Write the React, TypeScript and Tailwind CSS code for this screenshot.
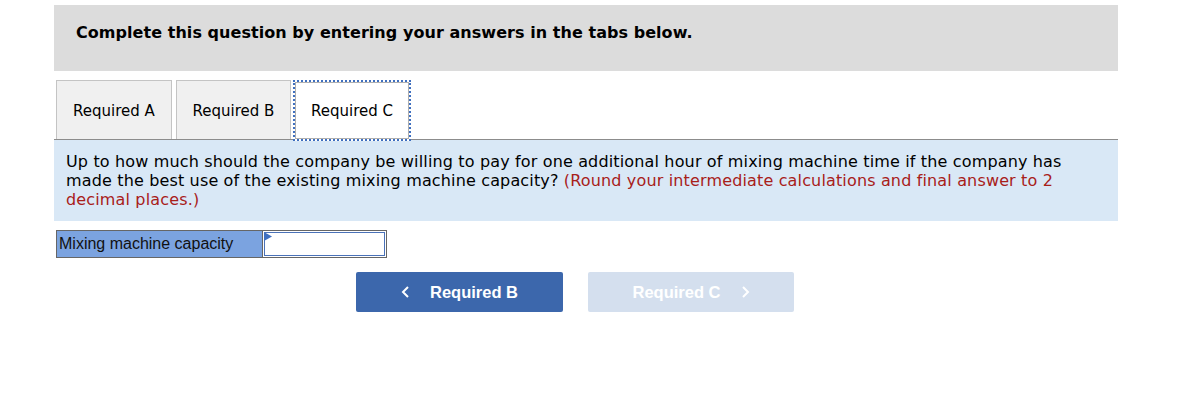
import React from "react";

export default function App() {
  const verdana = { fontFamily: '"DejaVu Sans", Verdana, sans-serif' };
  return (
    <div className="w-[1186px] h-[403px] bg-white" style={verdana}>
      <div className="ml-[54px] w-[1064px] pt-[5px]">
        <div className="h-[66px] bg-[#dcdcdc] pl-[22px] pt-[18px]">
          <div className="text-[16px] font-bold text-black leading-[19px] tracking-[0.05px]">
            Complete this question by entering your answers in the tabs below.
          </div>
        </div>
        <div className="mt-[9px] flex items-end border-b border-[#8c8c8c] pl-[2px] h-[60px]">
          <div className="w-[116px] h-[59px] bg-[#f0f0f0] border border-b-0 border-[#c4c4c4] flex items-center justify-center pt-[2px] text-[15px] text-black">
            Required A
          </div>
          <div className="ml-[4px] w-[115px] h-[59px] bg-[#f0f0f0] border border-b-0 border-[#c4c4c4] flex items-center justify-center pt-[2px] text-[15px] text-black">
            Required B
          </div>
          <div className="ml-[2px] w-[118px] h-[61px] mb-[-2px] bg-white border-2 border-dotted border-[#3f6fbf] flex items-center justify-center text-[15px] text-black">
            <div className="w-full h-full border border-[#b0b0b0] flex items-center justify-center pt-[1px]">
              Required C
            </div>
          </div>
        </div>
        <div className="bg-[#d9e8f6] h-[81px] pl-[12px] pr-[30px] pt-[12px] text-[16px] leading-[19px] tracking-[0.15px] text-black">
          Up to how much should the company be willing to pay for one additional hour of mixing machine time if the company has made the best use of the existing mixing machine capacity?{" "}
          <span className="text-[#a8201a]">(Round your intermediate calculations and final answer to 2 decimal places.)</span>
        </div>
        <div className="mt-[9px] ml-[2px] flex w-[331px] h-[28px] border border-[#666666]">
          <div
            className="w-[206px] h-full bg-[#7ba3e0] border-r border-[#666666] pl-[2px] flex items-center text-[16px] text-[#111]"
            style={{ fontFamily: '"Liberation Sans", Arial, sans-serif' }}
          >
            Mixing machine capacity
          </div>
          <div className="relative flex-1 h-full p-[1px] bg-white">
            <div className="w-full h-full border border-[#4a72b8] bg-white" />
            <svg className="absolute left-[1px] top-[1px]" width="8" height="9" viewBox="0 0 8 9">
              <polygon points="0,0 8,4.5 0,9" fill="#3f6fbf" />
            </svg>
          </div>
        </div>
        <div
          className="mt-[14px] flex gap-[25px] pl-[302px]"
          style={{ fontFamily: '"Liberation Sans", Arial, sans-serif' }}
        >
          <div className="w-[207px] h-[40px] rounded-[2px] bg-[#3c67ac] flex items-center justify-center text-white font-bold text-[16.5px]">
            <svg width="9" height="14" viewBox="0 0 9 14" className="mr-[20px]">
              <polyline points="7,2 2,7 7,12" fill="none" stroke="white" strokeWidth="2" />
            </svg>
            Required B
          </div>
          <div className="w-[206px] h-[40px] rounded-[2px] bg-[#d4dfee] flex items-center justify-center text-white font-bold text-[16.5px]">
            Required C
            <svg width="9" height="14" viewBox="0 0 9 14" className="ml-[20px]">
              <polyline points="2,2 7,7 2,12" fill="none" stroke="white" strokeWidth="2" />
            </svg>
          </div>
        </div>
      </div>
    </div>
  );
}
